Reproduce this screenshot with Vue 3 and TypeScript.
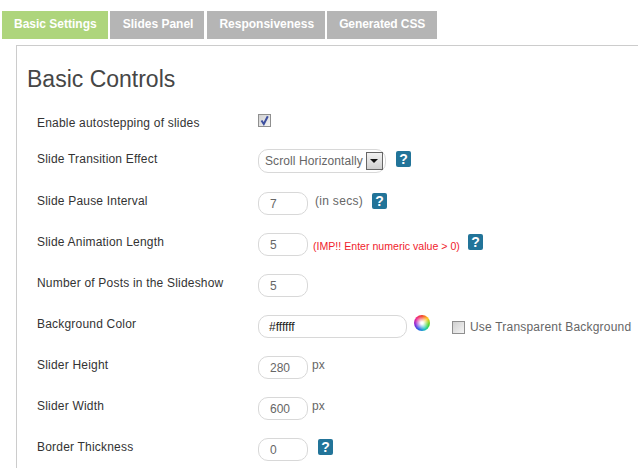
<script setup lang="ts">
const tabs = ['Basic Settings', 'Slides Panel', 'Responsiveness', 'Generated CSS']
</script>

<template>
  <div class="page">
    <nav class="tabs">
      <a v-for="(tab, index) in tabs" :key="tab" :class="['tab', { active: index === 0 }]">{{ tab }}</a>
    </nav>

    <section class="panel">
      <h2>Basic Controls</h2>

      <div class="row first">
        <label>Enable autostepping of slides</label>
        <span class="check checked">
          <svg width="11" height="11" viewBox="0 0 11 11"><path d="M2.5 5.5 L4.8 9 L8.8 1.2" fill="none" stroke="#3d4f9f" stroke-width="2" /></svg>
        </span>
      </div>

      <div class="row select-row">
        <label>Slide Transition Effect</label>
        <div class="select">
          <span class="select-text">Scroll Horizontally</span>
          <span class="arrow"><i></i></span>
        </div>
        <span class="help help-select">?</span>
      </div>

      <div class="row">
        <label>Slide Pause Interval</label>
        <div class="input small">7</div>
        <span class="note secs">(in secs)</span>
        <span class="help help-secs">?</span>
      </div>

      <div class="row">
        <label>Slide Animation Length</label>
        <div class="input small">5</div>
        <span class="warn">(IMP!! Enter numeric value &gt; 0)</span>
        <span class="help help-warn">?</span>
      </div>

      <div class="row">
        <label>Number of Posts in the Slideshow</label>
        <div class="input small">5</div>
      </div>

      <div class="row">
        <label>Background Color</label>
        <div class="input wide">#ffffff</div>
        <span class="wheel"></span>
        <span class="check transparent"></span>
        <span class="note transparent-label">Use Transparent Background</span>
      </div>

      <div class="row">
        <label>Slider Height</label>
        <div class="input small">280</div>
        <span class="note unit">px</span>
      </div>

      <div class="row">
        <label>Slider Width</label>
        <div class="input small">600</div>
        <span class="note unit">px</span>
      </div>

      <div class="row">
        <label>Border Thickness</label>
        <div class="input small">0</div>
        <span class="help help-border">?</span>
      </div>
    </section>
  </div>
</template>

<style>
html,
body {
  margin: 0;
  background: #fff;
  overflow: hidden;
}
</style>

<style scoped>
.page {
  width: 638px;
  height: 468px;
  overflow: hidden;
  font-family: 'Liberation Sans', Arial, sans-serif;
  font-size: 12px;
  color: #444;
  box-sizing: border-box;
  padding: 11px 0 0 2px;
}

.tabs {
  display: flex;
  gap: 2px;
}

.tab {
  height: 28px;
  line-height: 27px;
  padding: 0 12px;
  background: #b5b5b5;
  color: #fff;
  font-weight: bold;
}

.tab.active {
  background: #aed57c;
  padding-right: 11px;
}

.tab:nth-child(2) {
  padding: 0 11px 0 13px;
}

.tab:nth-child(3) {
  margin-left: 1px;
  padding-right: 11px;
}

.tab:nth-child(4) {
  padding: 0 12px;
  letter-spacing: -0.1px;
}

.panel {
  margin: 6px 0 0 14px;
  height: 460px;
  border: 1px solid #ccc;
  border-right: 0;
  padding: 0 0 0 20px;
}

h2 {
  margin: 20px 0 0 -10px;
  font-size: 23px;
  line-height: 27px;
  font-weight: normal;
  color: #464646;
}

.row {
  display: flex;
  align-items: flex-start;
  height: 22px;
  margin-bottom: 19px;
}

.row.first {
  margin-top: 20px;
  height: 16px;
  margin-bottom: 21px;
}

.row.select-row {
  height: 23px;
  margin-bottom: 19px;
}

label {
  flex: 0 0 221px;
  line-height: 16px;
  letter-spacing: 0.2px;
  color: #333;
  padding-top: 1px;
}

.first label {
  padding-top: 2px;
}

.check {
  box-sizing: border-box;
  width: 13px;
  height: 13px;
  border: 1px solid #8f8f8f;
  background: linear-gradient(135deg, #d0d0d0, #f4f4f4);
  display: block;
}

.checked {
  margin-top: 1px;
}

.check svg {
  display: block;
}

.select,
.input {
  box-sizing: border-box;
  border: 1px solid #d8d8d8;
  border-radius: 10px;
  color: #666;
  background: #fff;
}

.select {
  width: 128px;
  height: 24px;
  margin-top: -1px;
  display: flex;
  align-items: center;
  padding-left: 6px;
  white-space: nowrap;
}

.select-text {
  letter-spacing: 0.1px;
}

.arrow {
  box-sizing: border-box;
  margin-left: 3px;
  width: 17px;
  height: 18px;
  border: 1px solid #666;
  background: linear-gradient(#f2f2f2, #cfcfcf);
  display: flex;
  align-items: center;
  justify-content: center;
}

.arrow i {
  border: 4px solid transparent;
  border-top: 4px solid #111;
  border-bottom: 0;
}

.input {
  height: 23px;
  line-height: 22px;
  padding-left: 11px;
}

.input.small {
  width: 50px;
}

.input.wide {
  width: 149px;
  color: #222;
  padding-left: 10px;
}

.note {
  color: #666;
}

.secs {
  margin-left: 7px;
  line-height: 18px;
  letter-spacing: 0.3px;
}

.unit {
  margin-left: 4px;
  line-height: 18px;
}

.warn {
  color: #f01c2c;
  font-size: 10.6px;
  margin-left: 5px;
  line-height: 27px;
}

.help {
  box-sizing: border-box;
  width: 15px;
  height: 16px;
  border-radius: 2px;
  background: #227499;
  color: #fff;
  font-weight: bold;
  font-size: 14px;
  line-height: 16px;
  text-align: center;
  display: block;
}

.help-select {
  margin-left: 10px;
  margin-top: 1px;
}

.help-secs {
  margin-left: 9px;
  margin-top: 1px;
}

.help-warn {
  margin-left: 8px;
  margin-top: 1px;
}

.help-border {
  margin-left: 10px;
  margin-top: 1px;
}

.wheel {
  width: 16px;
  height: 16px;
  margin: 0 0 0 7px;
  border-radius: 50%;
  background:
    radial-gradient(circle, #fff 0 10%, rgba(255, 255, 255, 0) 62%),
    conic-gradient(#f0402c, #ffc81e, #4fd62a, #18c8b8, #2460e8, #8a28d8, #f02c90, #f0402c);
}

.transparent {
  margin: 6px 0 0 22px;
}

.transparent-label {
  margin: 3px 0 0 5px;
  line-height: 18px;
  white-space: nowrap;
  letter-spacing: 0.2px;
}
</style>
